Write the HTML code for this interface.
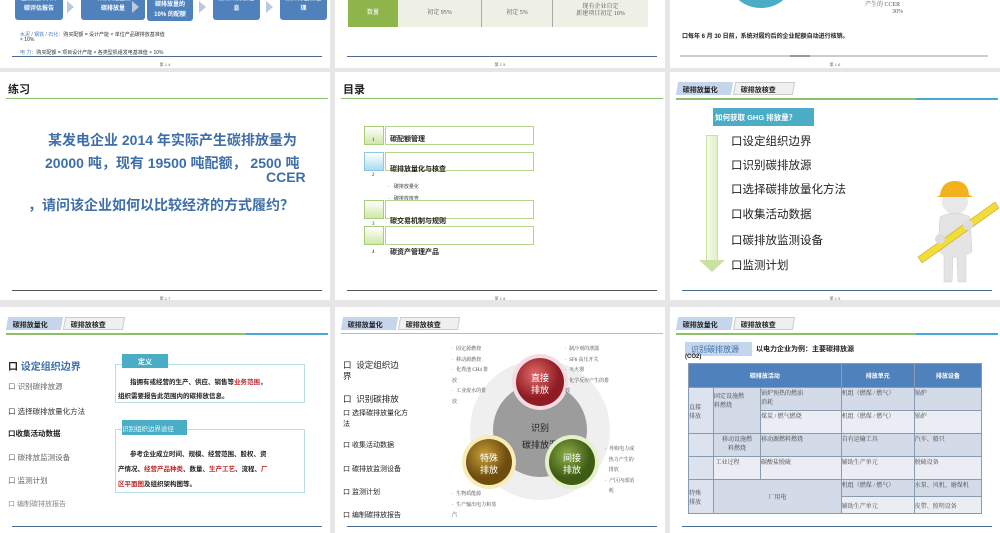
<!DOCTYPE html>
<html><head><meta charset="utf-8"><style>
*{margin:0;padding:0;box-sizing:border-box}
body{width:1000px;height:533px;background:#e6e6e6;position:relative;overflow:hidden;font-family:"Liberation Sans","Noto Sans CJK SC",sans-serif;color:#222}
.s{position:absolute;background:#fff;overflow:hidden}
.a{position:absolute;white-space:nowrap}
.sr{font-family:"Liberation Serif","Noto Serif CJK SC",serif}
.bl{position:absolute;left:12px;right:8px;height:2px;background:#4a6a8e}
.pn{position:absolute;font-size:4px;color:#666;width:100%;text-align:center}
.tabs{position:absolute;left:7px;top:10px;height:13px;width:120px}
.t1{position:absolute;left:0;top:0;width:55px;height:13px;background:#c5d6ec;font-size:7px;font-weight:bold;padding:3px 0 0 6px;transform:skewX(-10deg)}
.t2{position:absolute;left:57px;top:0;width:60px;height:13px;background:#f0f0f0;border:1px solid #ccc;font-size:7px;font-weight:bold;padding:2px 0 0 6px;transform:skewX(-10deg)}
.t1 span,.t2 span{display:inline-block;transform:skewX(10deg)}
.gl{position:absolute;left:6px;top:26px;width:240px;height:2px;background:#8cc06a}
.bll{position:absolute;left:246px;top:26px;width:82px;height:2px;background:#4aa6d6}
.box{position:absolute;background:#4f81bd;color:#fff;font-size:6px;font-weight:bold;text-align:center;border-radius:3px;line-height:10px;padding-top:2px}
.arr{position:absolute;width:0;height:0;border-top:6px solid transparent;border-bottom:6px solid transparent;border-left:7px solid #b9c9df}
td{border:1px solid #8a9bb0}
</style></head><body>

<!-- Row 0 -->
<div class="s" style="left:0;top:0;width:330px;height:68px">
 <div class="box" style="left:15px;top:-8px;width:48px;height:28px">企业提交项目<br>碳评估报告</div>
 <div class="arr" style="left:67px;top:1px"></div>
 <div class="box" style="left:81px;top:-8px;width:64px;height:28px">政府核定企业<br>碳排放量</div>
 <div class="arr" style="left:132px;top:1px"></div>
 <div class="box" style="left:147px;top:-12px;width:46px;height:33px">&nbsp;<br>碳排放量的<br>10% 的配额</div>
 <div class="arr" style="left:199px;top:1px"></div>
 <div class="box" style="left:213px;top:-8px;width:47px;height:28px">报告碳排放信<br>息</div>
 <div class="arr" style="left:266px;top:1px"></div>
 <div class="box" style="left:280px;top:-8px;width:47px;height:28px">按控排企业管<br>理</div>
 <div class="a" style="left:20px;top:31px;font-size:5px;color:#333"><span style="color:#4f81bd">水泥 / 钢铁 / 石化：</span>购买配额 = 设计产能 × 单位产品碳排放基准值</div>
 <div class="a" style="left:20px;top:37px;font-size:5px;color:#333">× 10%</div>
 <div class="a" style="left:20px;top:49px;font-size:5px;color:#333"><span style="color:#4f81bd">电 力：</span>购买配额 = 项目设计产能 × 各类型机组发电基准值 × 10%</div>
 <div class="bl" style="top:56px;height:1px"></div>
 <div class="pn" style="top:62px">第 1 4</div>
</div>

<div class="s" style="left:335px;top:0;width:330px;height:68px">
 <div class="a" style="left:13px;top:-5px;width:50px;height:32px;background:#8db54a;color:#fff;font-size:6px;text-align:center;padding-top:12px">数量</div>
 <div class="a sr" style="left:63px;top:-5px;width:84px;height:32px;background:#eef0e6;border-right:1px solid #aaa;font-size:6px;text-align:center;padding-top:12px;color:#555">初定 95%</div>
 <div class="a sr" style="left:147px;top:-5px;width:71px;height:32px;background:#eef0e6;border-right:1px solid #aaa;font-size:6px;text-align:center;padding-top:12px;color:#555">初定 5%</div>
 <div class="a sr" style="left:218px;top:-5px;width:95px;height:32px;background:#eef0e6;font-size:6px;text-align:center;padding-top:9px;color:#555;line-height:7px">现有企业自定<br>新建项目初定 10%</div>
 <div class="bl" style="top:56px;height:1px"></div>
 <div class="pn" style="top:62px">第 1 5</div>
</div>

<div class="s" style="left:670px;top:0;width:330px;height:68px">
 <div class="a" style="left:60px;top:-45px;width:62px;height:53px;border-radius:50%;background:#4bacc6"></div>
 <div class="a sr" style="left:195px;top:-1px;font-size:6px;color:#555">产生的 CCER</div>
 <div class="a sr" style="left:222px;top:9px;font-size:6px;color:#555">30%</div>
 <div class="a" style="left:12px;top:31px;font-size:6px;font-weight:bold">口每年 6 月 30 日前，系统对履约后的企业配额自动进行核销。</div>
 <div class="a" style="left:10px;top:55px;width:308px;height:2px;background:#ccc"></div>
 <div class="a" style="left:120px;top:55px;width:20px;height:2px;background:#999"></div>
 <div class="pn" style="top:62px">第 1 6</div>
</div>

<!-- Row 1 -->
<div class="s" style="left:0;top:72px;width:330px;height:228px">
 <div class="a" style="left:8px;top:9px;font-size:11px;font-weight:bold">练习</div>
 <div class="a" style="left:6px;top:26px;width:322px;height:1px;background:#8cc06a"></div>
 <div class="a" style="left:48px;top:58px;font-size:14px;font-weight:bold;color:#3f6fa8">某发电企业 2014 年实际产生碳排放量为</div>
 <div class="a" style="left:45px;top:81px;font-size:14px;font-weight:bold;color:#3f6fa8">20000 吨，现有 19500 吨配额， 2500 吨</div>
 <div class="a" style="left:266px;top:97px;font-size:14px;font-weight:bold;color:#3f6fa8">CCER</div>
 <div class="a" style="left:28px;top:123px;font-size:14px;font-weight:bold;color:#3f6fa8">，请问该企业如何以比较经济的方式履约？</div>
 <div class="bl" style="top:218px;height:1px;background:#555"></div>
 <div class="pn" style="top:224px">第 1 7</div>
</div>

<div class="s" style="left:335px;top:72px;width:330px;height:228px">
 <div class="a" style="left:8px;top:9px;font-size:11px;font-weight:bold">目录</div>
 <div class="a" style="left:6px;top:26px;width:322px;height:1px;background:#8cc06a"></div>
 <div class="a" style="left:29px;top:54px;width:20px;height:19px;background:linear-gradient(#fff,#cfe8a8);border:1px solid #a9cc7c"></div>
 <div class="a" style="left:50px;top:54px;width:149px;height:19px;border:1px solid #b5d58a"></div>
 <div class="a sr" style="left:37px;top:66px;font-size:5px">1</div>
 <div class="a" style="left:55px;top:62px;font-size:7px;font-weight:bold">碳配额管理</div>
 <div class="a" style="left:29px;top:80px;width:20px;height:19px;background:linear-gradient(#fff,#a8dcf0);border:1px solid #8fc7dc"></div>
 <div class="a" style="left:50px;top:80px;width:149px;height:19px;border:1px solid #b5d58a"></div>
 <div class="a sr" style="left:37px;top:101px;font-size:5px">2</div>
 <div class="a" style="left:55px;top:92px;font-size:7px;font-weight:bold">碳排放量化与核查</div>
 <div class="a" style="left:53px;top:111px;font-size:5px;color:#444">·&nbsp;&nbsp; 碳排放量化</div>
 <div class="a" style="left:53px;top:123px;font-size:5px;color:#444">·&nbsp;&nbsp; 碳排放核查</div>
 <div class="a" style="left:29px;top:128px;width:20px;height:19px;background:linear-gradient(#fff,#cfe8a8);border:1px solid #a9cc7c"></div>
 <div class="a" style="left:50px;top:128px;width:149px;height:19px;border:1px solid #b5d58a"></div>
 <div class="a sr" style="left:37px;top:150px;font-size:5px">3</div>
 <div class="a" style="left:55px;top:144px;font-size:7px;font-weight:bold">碳交易机制与规则</div>
 <div class="a" style="left:29px;top:154px;width:20px;height:19px;background:linear-gradient(#fff,#cfe8a8);border:1px solid #a9cc7c"></div>
 <div class="a" style="left:50px;top:154px;width:149px;height:19px;border:1px solid #b5d58a"></div>
 <div class="a sr" style="left:37px;top:178px;font-size:5px">4</div>
 <div class="a" style="left:55px;top:175px;font-size:7px;font-weight:bold">碳资产管理产品</div>
 <div class="bl" style="top:218px;height:1px;background:#555"></div>
 <div class="pn" style="top:224px">第 1 8</div>
</div>

<div class="s" style="left:670px;top:72px;width:330px;height:228px">
 <div class="tabs"><div class="t1"><span>碳排放量化</span></div><div class="t2"><span>碳排放核查</span></div></div>
 <div class="gl"></div><div class="bll"></div>
 <div class="a" style="left:43px;top:36px;width:101px;height:18px;background:#4bacc6;color:#fff;font-size:7.5px;font-weight:bold;padding:4px 0 0 2px">如何获取 GHG 排放量？</div>
 <div class="a" style="left:36px;top:63px;width:12px;height:127px;background:linear-gradient(90deg,#f4fae8,#e0f0c8);border:1px solid #c8e2a4;border-bottom:none"></div>
 <div class="a" style="left:29px;top:188px;width:0;height:0;border-left:13px solid transparent;border-right:13px solid transparent;border-top:12px solid #c8e2a4"></div>
 <div class="a" style="left:61px;top:61px;font-size:11.5px">口设定组织边界</div>
 <div class="a" style="left:61px;top:85px;font-size:11.5px">口识别碳排放源</div>
 <div class="a" style="left:61px;top:109px;font-size:11.5px">口选择碳排放量化方法</div>
 <div class="a" style="left:61px;top:134px;font-size:11.5px">口收集活动数据</div>
 <div class="a" style="left:61px;top:160px;font-size:11.5px">口碳排放监测设备</div>
 <div class="a" style="left:61px;top:185px;font-size:11.5px">口监测计划</div>
 <svg class="a" style="left:240px;top:105px" width="90" height="110" viewBox="0 0 90 110">
  <ellipse cx="45" cy="25" rx="13" ry="12" fill="#e8e8e8"/>
  <path d="M30 18 Q32 4 45 4 Q58 4 59 18 L63 20 L27 20Z" fill="#f2b21e"/>
  <path d="M30 40 Q45 32 60 40 L62 75 L56 78 L56 105 L48 105 L47 80 L43 80 L42 105 L34 105 L34 78 L28 74Z" fill="#e4e4e4" stroke="#ccc" stroke-width=".5"/>
  <path d="M8 80 L85 25 L89 31 L12 86Z" fill="#f0dc3a" stroke="#c9a820" stroke-width=".6"/>
  <circle cx="30" cy="62" r="5" fill="#ddd"/><circle cx="58" cy="48" r="5" fill="#ddd"/>
 </svg>
 <div class="bl" style="top:218px;height:1px"></div>
 <div class="pn" style="top:224px">第 1 9</div>
</div>

<!-- Row 2 -->
<div class="s" style="left:0;top:307px;width:330px;height:226px">
 <div class="tabs"><div class="t1"><span>碳排放量化</span></div><div class="t2"><span>碳排放核查</span></div></div>
 <div class="gl"></div><div class="bll"></div>
 <div class="a" style="left:8px;top:51px;font-size:10px;font-weight:bold"><span style="color:#222">口</span> <span style="color:#3f6fa8">设定组织边界</span></div>
 <div class="a" style="left:8px;top:74px;font-size:7.5px;color:#666">口 识别碳排放源</div>
 <div class="a" style="left:8px;top:99px;font-size:7.5px;color:#333">口 选择碳排放量化方法</div>
 <div class="a" style="left:8px;top:121px;font-size:7.5px;font-weight:bold">口收集活动数据</div>
 <div class="a" style="left:8px;top:145px;font-size:7.5px;color:#666">口 碳排放监测设备</div>
 <div class="a" style="left:8px;top:168px;font-size:7.5px;color:#666">口 监测计划</div>
 <div class="a" style="left:8px;top:192px;font-size:7px;color:#888">口 编制碳排放报告</div>
 <div class="a" style="left:115px;top:57px;width:190px;height:39px;border:1px solid #b8dde8"></div>
 <div class="a" style="left:122px;top:47px;width:46px;height:14px;background:#4bacc6;color:#fff;font-size:7px;font-weight:bold;text-align:center;padding-top:3px">定义</div>
 <div class="a" style="left:130px;top:69px;font-size:6.5px;font-weight:bold">指拥有或经营的生产、供应、销售等<span style="color:#c0282d">业务范围</span>，</div>
 <div class="a" style="left:118px;top:83px;font-size:6.5px;font-weight:bold">组织需要报告此范围内的碳排放信息。</div>
 <div class="a" style="left:115px;top:122px;width:190px;height:64px;border:1px solid #b8dde8"></div>
 <div class="a" style="left:122px;top:113px;width:65px;height:15px;background:#4bacc6;color:#dff;font-size:6.5px;padding-top:3px">识别组织边界途径</div>
 <div class="a" style="left:130px;top:141px;font-size:6.5px;font-weight:bold">参考企业成立时间、规模、经营范围、股权、资</div>
 <div class="a" style="left:118px;top:156px;font-size:6.5px;font-weight:bold">产情况、<span style="color:#c0282d">经营产品种类</span>、数量、<span style="color:#c0282d">生产工艺</span>、流程、<span style="color:#c0282d">厂</span></div>
 <div class="a" style="left:118px;top:171px;font-size:6.5px;font-weight:bold"><span style="color:#c0282d">区平面图</span>及组织架构图等。</div>
 <div class="bl" style="top:219px;height:1px"></div>
</div>

<div class="s" style="left:335px;top:307px;width:330px;height:226px">
 <div class="tabs"><div class="t1"><span>碳排放量化</span></div><div class="t2"><span>碳排放核查</span></div></div>
 <div class="a" style="left:6px;top:26px;width:322px;height:1px;background:#bbb"></div>
 <div class="a" style="left:8px;top:52px;font-size:8.5px">口&nbsp; 设定组织边</div>
 <div class="a" style="left:8px;top:63px;font-size:8.5px">界</div>
 <div class="a" style="left:8px;top:86px;font-size:8.5px">口&nbsp; 识别碳排放</div>
 <div class="a" style="left:8px;top:101px;font-size:7px">口 选择碳排放量化方</div>
 <div class="a" style="left:8px;top:112px;font-size:7px">法</div>
 <div class="a" style="left:8px;top:133px;font-size:7px">口 收集活动数据</div>
 <div class="a" style="left:8px;top:157px;font-size:7px">口 碳排放监测设备</div>
 <div class="a" style="left:8px;top:180px;font-size:7px">口 监测计划</div>
 <div class="a" style="left:8px;top:203px;font-size:7px">口 编制碳排放报告</div>
 <svg class="a" style="left:100px;top:30px" width="230" height="190" viewBox="0 0 230 190">
  <defs>
   <radialGradient id="r" cx=".4" cy=".35"><stop offset="0" stop-color="#e36a6a"/><stop offset="1" stop-color="#8e1c22"/></radialGradient>
   <radialGradient id="y" cx=".4" cy=".35"><stop offset="0" stop-color="#c8a03a"/><stop offset="1" stop-color="#6e4d0e"/></radialGradient>
   <radialGradient id="g" cx=".4" cy=".35"><stop offset="0" stop-color="#8cb04a"/><stop offset="1" stop-color="#3f5c14"/></radialGradient>
  </defs>
  <circle cx="105" cy="93" r="70" fill="#efefef"/>
  <circle cx="105" cy="93" r="47" fill="#9c9c9c"/>
  <text x="105" y="94" font-size="9" text-anchor="middle" fill="#222" font-family="Noto Sans CJK SC">识别</text>
  <text x="105" y="111" font-size="9" text-anchor="middle" fill="#222" font-family="Noto Sans CJK SC">碳排放源</text>
  <circle cx="105" cy="45" r="28" fill="#f4dce4"/><circle cx="105" cy="45" r="24" fill="url(#r)"/>
  <text x="105" y="44" font-size="9" text-anchor="middle" fill="#fff" font-family="Noto Sans CJK SC">直接</text>
  <text x="105" y="56" font-size="9" text-anchor="middle" fill="#fff" font-family="Noto Sans CJK SC">排放</text>
  <circle cx="54" cy="125" r="27" fill="#f8ecb8"/><circle cx="54" cy="125" r="23" fill="url(#y)"/>
  <text x="54" y="124" font-size="9" text-anchor="middle" fill="#fff" font-family="Noto Sans CJK SC">特殊</text>
  <text x="54" y="136" font-size="9" text-anchor="middle" fill="#fff" font-family="Noto Sans CJK SC">排放</text>
  <circle cx="137" cy="125" r="27" fill="#e4f0c8"/><circle cx="137" cy="125" r="23" fill="url(#g)"/>
  <text x="137" y="124" font-size="9" text-anchor="middle" fill="#fff" font-family="Noto Sans CJK SC">间接</text>
  <text x="137" y="136" font-size="9" text-anchor="middle" fill="#fff" font-family="Noto Sans CJK SC">排放</text>
 </svg>
 <div class="a sr" style="left:117px;top:38px;font-size:5px;color:#444;line-height:10.5px">·&nbsp; 固定源燃烧<br>·&nbsp; 移动源燃烧<br>·&nbsp; 化粪池 CH4 排<br>放<br>·&nbsp; 工业废水的排<br>放</div>
 <div class="a sr" style="left:230px;top:38px;font-size:5px;color:#444;line-height:10.5px">·&nbsp; 制冷剂的泄露<br>·&nbsp; SF6 高压开关<br>·&nbsp; 灭火器<br>·&nbsp; 化学反应产生的排<br>放</div>
 <div class="a sr" style="left:270px;top:138px;font-size:5px;color:#444;line-height:10.5px">·&nbsp; 外购电力或<br>&nbsp;&nbsp; 热力产生的<br>&nbsp;&nbsp; 排放<br>·&nbsp; 产区内部消<br>&nbsp;&nbsp; 耗</div>
 <div class="a sr" style="left:117px;top:183px;font-size:5px;color:#444;line-height:10.5px">·&nbsp; 生物质能源<br>·&nbsp; 生产输出电力和蒸<br>汽</div>
 <div class="bl" style="top:219px;height:1px"></div>
</div>

<div class="s" style="left:670px;top:307px;width:330px;height:226px">
 <div class="tabs"><div class="t1"><span>碳排放量化</span></div><div class="t2"><span>碳排放核查</span></div></div>
 <div class="gl"></div><div class="bll"></div>
 <div class="a" style="left:15px;top:35px;width:67px;height:14px;background:#c5d6ec;color:#3f6fa8;font-size:8px;padding:2px 0 0 6px">识别碳排放源</div>
 <div class="a" style="left:86px;top:37px;font-size:7px;font-weight:bold">以电力企业为例：主要碳排放源</div>
 <div class="a" style="left:15px;top:47px;font-size:6px;font-weight:bold">(CO2)</div>
 <table class="a sr" style="left:18px;top:56px;width:294px;border-collapse:collapse;font-size:6px;color:#444">
  <tr style="height:24px;background:#4f81bd;color:#fff;font-family:'Liberation Sans','Noto Sans CJK SC',sans-serif;font-weight:bold;text-align:center"><td colspan="3" style="width:138px">碳排放活动</td><td style="width:73px">排放单元</td><td>排放设备</td></tr>
  <tr style="height:23px;background:#d3dbe8;vertical-align:top"><td rowspan="2" style="width:25px;background:#dce3ee;vertical-align:middle">直接<br>排放</td><td rowspan="2" style="width:47px;vertical-align:top;padding-top:3px">固定设施燃<br>料燃烧</td><td>锅炉预热的燃油<br>消耗</td><td>机组（燃煤 / 燃气）</td><td>锅炉</td></tr>
  <tr style="height:23px;background:#eaeef4;vertical-align:top"><td>煤炭 / 燃气燃烧</td><td>机组（燃煤 / 燃气）</td><td>锅炉</td></tr>
  <tr style="height:23px;background:#d3dbe8;vertical-align:top"><td style="background:#dce3ee"></td><td style="text-align:center">移动设施燃<br>料燃烧</td><td>移动源燃料燃烧</td><td>自有运输工具</td><td>汽车、船只</td></tr>
  <tr style="height:23px;background:#eaeef4;vertical-align:top"><td style="background:#dce3ee"></td><td>&nbsp;工业过程</td><td>碳酸盐脱硫</td><td>辅助生产单元</td><td>脱硫设备</td></tr>
  <tr style="height:17px;background:#d3dbe8;vertical-align:top"><td rowspan="2" style="background:#dce3ee;vertical-align:middle">特殊<br>排放</td><td rowspan="2" colspan="2" style="text-align:center;vertical-align:middle">厂用电</td><td>机组（燃煤 / 燃气）</td><td>水泵、风机、磨煤机</td></tr>
  <tr style="height:17px;background:#eaeef4"><td>辅助生产单元</td><td>皮带、照明设备</td></tr>
 </table>
 <div class="bl" style="top:219px;height:1px"></div>
</div>

</body></html>
